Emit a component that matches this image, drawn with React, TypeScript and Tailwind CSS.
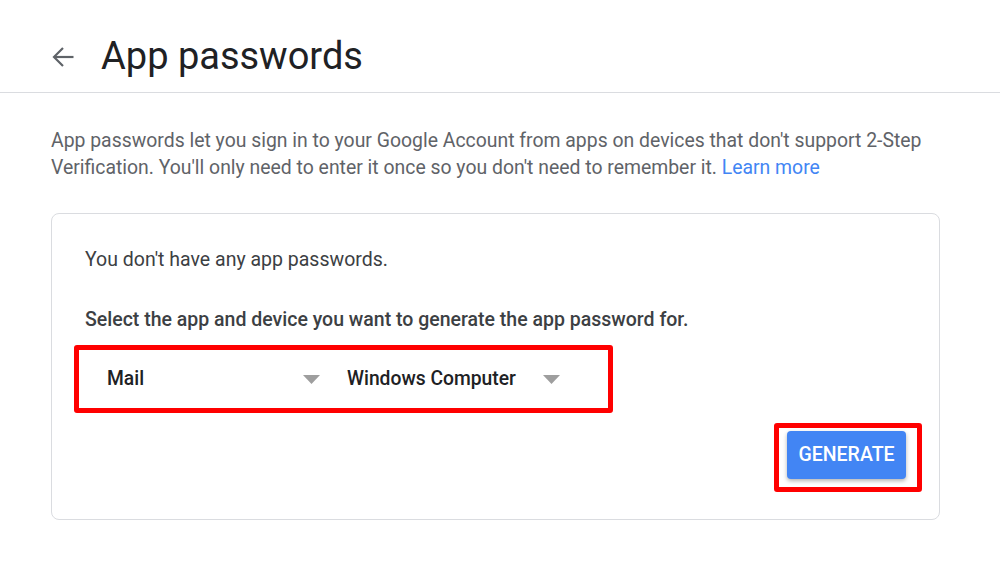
import React from "react";

function Caret() {
  return (
    <svg width="17" height="9" viewBox="0 0 17 9" className="shrink-0">
      <polygon points="0,0 17,0 8.5,9" fill="#9e9e9e" />
    </svg>
  );
}

function Dropdown({ label }: { label: string }) {
  return (
    <div className="flex w-[213px] items-center justify-between">
      <span className="text-[19.3px] font-medium text-[#202124]">{label}</span>
      <Caret />
    </div>
  );
}

export default function App() {
  return (
    <div className="min-h-[581px] w-[1000px] bg-white font-['Roboto',sans-serif]">
      <header className="flex h-[93px] items-center border-b border-[#dadce0] pl-[52px] pt-[22px]">
        <svg width="22" height="20" viewBox="0 0 22 20" fill="none" stroke="#5f6368" strokeWidth="2.2" strokeLinecap="butt">
          <path d="M21.5 10H2" />
          <path d="M11 1L2 10l9 9" />
        </svg>
        <h1 className="ml-[27px] -mt-[3px] text-[38px] font-normal leading-none text-[#202124]">App passwords</h1>
      </header>
      <main className="pl-[51px] pr-[60px]">
        <p className="mt-[34px] text-[19.4px] leading-[27px] text-[#5f6368]">
          App passwords let you sign in to your Google Account from apps on devices that don't support 2-Step Verification. You'll only need to enter it once so you don't need to remember it.{" "}
          <a className="text-[#4285f4]">Learn more</a>
        </p>
        <section className="mt-[32px] rounded-[8px] border border-[#dadce0] pl-[33px] pr-[17px] pt-[32px] pb-[27px]">
          <p className="text-[19.5px] leading-[27px] text-[#3c4043]">You don't have any app passwords.</p>
          <p className="mt-[33px] text-[19.5px] font-medium leading-[27px] text-[#3c4043]">
            Select the app and device you want to generate the app password for.
          </p>
          <div className="-ml-[11px] mt-[12px] flex h-[68px] w-[539px] items-center gap-[27px] rounded-[3px] border-[5px] border-[#ff0000] pl-[28px]">
            <Dropdown label="Mail" />
            <Dropdown label="Windows Computer" />
          </div>
          <div className="mt-[10px] flex justify-end">
            <div className="rounded-[3px] border-[5px] border-[#ff0000] pt-[3px] pl-[8px] pr-[11px] pb-[8px]">
              <button className="flex h-[48px] w-[119px] items-center justify-center rounded-[4px] bg-[#4285f4] text-[19.5px] font-medium text-white shadow-[0_2px_4px_rgba(0,0,0,0.3)]">
                GENERATE
              </button>
            </div>
          </div>
        </section>
      </main>
    </div>
  );
}
